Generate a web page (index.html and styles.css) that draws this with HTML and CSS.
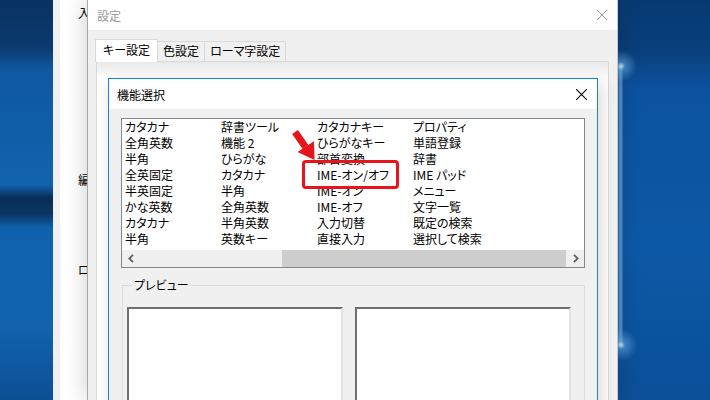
FILE: index.html
```html
<!DOCTYPE html>
<html lang="ja">
<head>
    <meta charset="UTF-8">
    <title>設定 - 機能選択</title>
    <link rel="stylesheet" href="styles.css">
</head>
<body>
<div class="desktop">

    <!-- 後ろのウィンドウ -->
    <div class="back-window">
        <div class="bw-text t1">入</div>
        <div class="bw-text t2">編</div>
        <div class="bw-text t3">ロ</div>
    </div>

    <!-- 設定ダイアログ -->
    <div class="settings">
        <div class="titlebar inactive">
            <span class="title">設定</span>
            <svg class="close" width="10" height="10" viewBox="0 0 10 10"><path d="M0 0L10 10M10 0L0 10" stroke="currentColor" stroke-width="1"/></svg>
        </div>
        <div class="settings-body">
            <div class="tabs">
                <div class="tab selected">キー設定</div>
                <div class="tab">色設定</div>
                <div class="tab">ローマ字設定</div>
            </div>
            <div class="tab-panel">

                <!-- 機能選択ダイアログ -->
                <div class="func-dialog">
                    <div class="titlebar">
                        <span class="title">機能選択</span>
                        <svg class="close" width="11" height="11" viewBox="0 0 11 11"><path d="M0 0L11 11M11 0L0 11" stroke="currentColor" stroke-width="1.1"/></svg>
                    </div>
                    <div class="func-body">
                        <div class="listbox">
                            <div class="columns">
                                <ul class="col">
                                    <li>カタカナ</li>
                                    <li>全角英数</li>
                                    <li>半角</li>
                                    <li>全英固定</li>
                                    <li>半英固定</li>
                                    <li>かな英数</li>
                                    <li>カタカナ</li>
                                    <li>半角</li>
                                </ul>
                                <ul class="col">
                                    <li>辞書ツール</li>
                                    <li>機能 2</li>
                                    <li>ひらがな</li>
                                    <li>カタカナ</li>
                                    <li>半角</li>
                                    <li>全角英数</li>
                                    <li>半角英数</li>
                                    <li>英数キー</li>
                                </ul>
                                <ul class="col">
                                    <li>カタカナキー</li>
                                    <li>ひらがなキー</li>
                                    <li>部首変換</li>
                                    <li>IME-オン/オフ</li>
                                    <li>IME-オン</li>
                                    <li>IME-オフ</li>
                                    <li>入力切替</li>
                                    <li>直接入力</li>
                                </ul>
                                <ul class="col">
                                    <li>プロパティ</li>
                                    <li>単語登録</li>
                                    <li>辞書</li>
                                    <li>IME パッド</li>
                                    <li>メニュー</li>
                                    <li>文字一覧</li>
                                    <li>既定の検索</li>
                                    <li>選択して検索</li>
                                </ul>
                            </div>
                            <div class="hscroll">
                                <div class="sb-btn">
                                    <svg width="6" height="9" viewBox="0 0 6 9"><path d="M5 0.8L1.3 4.5L5 8.2" fill="none" stroke="#606060" stroke-width="1.8"/></svg>
                                </div>
                                <div class="sb-track"><div class="sb-thumb"></div></div>
                                <div class="sb-btn">
                                    <svg width="6" height="9" viewBox="0 0 6 9"><path d="M1 0.8L4.7 4.5L1 8.2" fill="none" stroke="#606060" stroke-width="1.8"/></svg>
                                </div>
                            </div>
                        </div>

                        <div class="group">
                            <span class="group-label">プレビュー</span>
                            <div class="previews">
                                <div class="preview"></div>
                                <div class="preview"></div>
                            </div>
                        </div>
                    </div>
                </div>

            </div>
        </div>
    </div>

    <!-- 注釈 -->
    <svg class="arrow" width="32" height="36" viewBox="0 0 32 36">
        <path d="M5 4L15.5 19" stroke="#e8141b" stroke-width="7"/>
        <polygon points="24.5,32 7.5,24 24,13.2" fill="#e8141b"/>
    </svg>
    <div class="highlight"></div>
</div>
</body>
</html>
```

FILE: styles.css
```css
* {
    margin: 0;
    padding: 0;
    box-sizing: border-box;
}

body {
    font-family: "Noto Sans CJK JP", "Noto Sans", sans-serif;
    font-size: 12px;
    font-feature-settings: "palt";
    color: #000;
    background: #0b4a8e;
}

.desktop {
    position: relative;
    width: 710px;
    height: 400px;
    overflow: hidden;
    background:
        radial-gradient(circle at 621px 66px, rgba(220, 240, 255, 0.95) 0, rgba(120, 190, 250, 0.5) 4px, rgba(30, 120, 210, 0) 16px) no-repeat,
        radial-gradient(circle at 621px 345px, rgba(220, 240, 255, 0.9) 0, rgba(120, 190, 250, 0.5) 4px, rgba(30, 120, 210, 0) 16px) no-repeat,
        linear-gradient(90deg, transparent 618px, rgba(150, 200, 240, 0.5) 619px, rgba(150, 200, 240, 0.5) 622px, transparent 623px) 0 66px / 100% 280px no-repeat,
        linear-gradient(180deg, #08325f 0, #0a3a70 48px, #0f58a2 70px, #1162ad 185px, #082d57 198px, #0a3563 214px, #1061ad 228px, #1263af 320px, #0c4f95 400px) 0 0 / 60px 400px no-repeat,
        linear-gradient(180deg, #083a72 0, #0a3f7a 50px, #0c52a0 90px, #0d58a6 250px, #0b4f98 400px);
}

/* 後ろのウィンドウ */
.back-window {
    position: absolute;
    left: 53px;
    top: 0;
    width: 60px;
    height: 400px;
    background: #fff;
    border-left: 7px solid #f0f0f0;
    padding: 5px 0 0 18px;
}

.bw-text {
    line-height: 16px;
}

.bw-text.t2 {
    margin-top: 151px;
}

.bw-text.t3 {
    margin-top: 74px;
}

/* 設定ダイアログ */
.settings {
    position: absolute;
    left: 87px;
    top: 0;
    width: 531px;
    height: 400px;
    border-left: 1px solid #a8a8a8;
    border-right: 1px solid #c8c8c8;
    background: #f0f0f0;
    box-shadow: 0 0 22px rgba(0, 0, 0, 0.2);
}

.titlebar {
    display: flex;
    align-items: center;
    justify-content: space-between;
    height: 30px;
    background: #fff;
    padding: 0 10px 0 9px;
}

.titlebar.inactive {
    color: #999;
}

.close {
    display: block;
}

.settings-body {
    padding: 0 8px;
}

.tabs {
    display: flex;
    align-items: flex-end;
    padding-top: 9px;
}

.tab {
    height: 20px;
    line-height: 18px;
    padding: 0 5px;
    border: 1px solid #d9d9d9;
    border-bottom: none;
    margin-left: -1px;
    background: #f0f0f0;
}

.tab.selected {
    position: relative;
    z-index: 1;
    height: 23px;
    line-height: 20px;
    padding: 0 7px;
    margin-bottom: -1px;
    background: #fff;
}

.tab-panel {
    height: 360px;
    border: 1px solid #d9d9d9;
    background: linear-gradient(180deg, #e8e8e8 0, #fbfbfb 14px, #fff 20px);
    padding: 16px 10px 0 11px;
}

/* 機能選択ダイアログ */
.func-dialog {
    height: 360px;
    border: 1px solid #1883d7;
    background: #f0f0f0;
    box-shadow: 3px 5px 14px rgba(0, 0, 0, 0.16);
}

.func-dialog .titlebar {
    height: 30px;
    padding: 0 10px 0 8px;
}

.func-body {
    padding: 9px 12px 0;
}

.listbox {
    height: 150px;
    border: 1px solid #828790;
    background: #fff;
}

.columns {
    display: flex;
    padding-left: 3px;
}

.col {
    list-style: none;
    width: 96px;
}

.col li {
    height: 16px;
    line-height: 16px;
    white-space: nowrap;
}

.hscroll {
    display: flex;
    height: 17px;
    margin-top: 3px;
    background: #f0f0f0;
}

.sb-btn {
    width: 17px;
    display: flex;
    align-items: center;
    justify-content: center;
}

.sb-btn svg {
    display: block;
}

.sb-track {
    flex: 1;
}

.sb-thumb {
    width: 284px;
    height: 100%;
    margin-left: 143px;
    background: #cdcdcd;
}

/* プレビュー */
.group {
    margin: 17px 0 0 1px;
    height: 140px;
    border: 1px solid #dcdcdc;
    padding: 0 11px 0 4px;
}

.group-label {
    display: inline-block;
    margin: -9px 0 0 5px;
    padding: 0 2px;
    line-height: 16px;
    background: #f0f0f0;
    vertical-align: top;
}

.previews {
    display: flex;
    gap: 12px;
    margin-top: 4px;
}

.preview {
    width: 216px;
    height: 130px;
    background: #fff;
    border-top: 2px solid #6e6e6e;
    border-left: 2px solid #6e6e6e;
    border-right: 2px solid #e3e3e3;
    border-bottom: 2px solid #e3e3e3;
}

/* 注釈 */
.arrow {
    position: absolute;
    left: 290px;
    top: 128px;
}

.highlight {
    position: absolute;
    left: 302px;
    top: 160px;
    width: 97px;
    height: 29px;
    border: 3px solid #e8141b;
    border-radius: 4px;
}
```
